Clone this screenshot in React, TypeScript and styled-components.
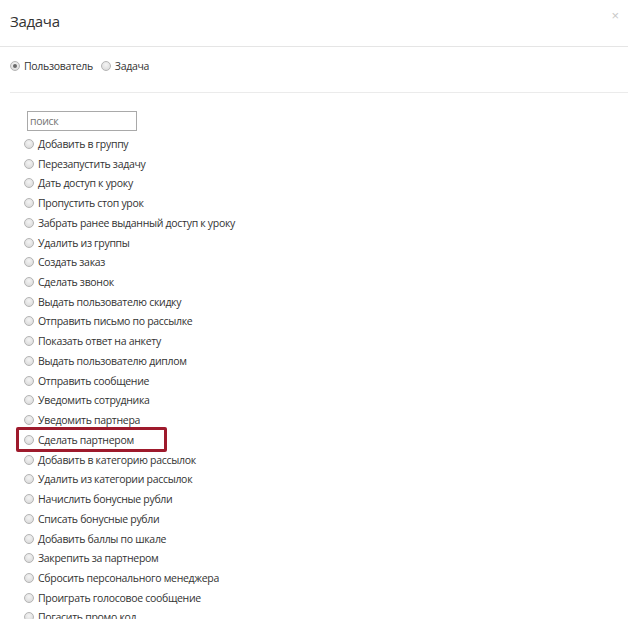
import React from "react";
import styled, { createGlobalStyle } from "styled-components";

const GlobalStyle = createGlobalStyle`
  html, body {
    margin: 0;
    padding: 0;
    background: #ffffff;
    font-family: "Open Sans", "Liberation Sans", Arial, sans-serif;
    color: #333333;
  }
`;

const Modal = styled.div`
  width: 628px;
  height: 619px;
  overflow: hidden;
  background: #fff;
`;

const Header = styled.div`
  position: relative;
  height: 47px;
  box-sizing: border-box;
  border-bottom: 1px solid #e5e5e5;
  padding: 0 10px;
  display: flex;
  align-items: center;
`;

const Title = styled.h4`
  margin: 0;
  font-size: 15px;
  font-weight: 400;
  letter-spacing: -0.3px;
  color: #333;
  padding-bottom: 4px;
`;

const Close = styled.span`
  position: absolute;
  right: 9px;
  top: 8px;
  font-family: "Liberation Sans", Arial, sans-serif;
  font-size: 13px;
  color: #c8c8c8;
`;

const Body = styled.div`
  padding: 0 0 0 10px;
`;

const ModeRow = styled.div`
  display: flex;
  align-items: center;
  height: 46px;
  box-sizing: border-box;
  padding-bottom: 8px;
  border-bottom: 1px solid #ebebeb;
  font-size: 10.5px;
  letter-spacing: -0.3px;
`;

const ModeOption = styled.label`
  display: inline-flex;
  align-items: center;
  gap: 4px;
  margin-right: 8px;
`;

const Radio = styled.span<{ $checked?: boolean }>`
  display: inline-block;
  width: 8px;
  height: 8px;
  border-radius: 50%;
  border: 1px solid #b4b4b4;
  background: radial-gradient(circle at 50% 35%, #f4f4f4 0%, #d6d6d6 100%);
  flex: none;
  position: relative;
  &::after {
    content: "";
    display: ${(p) => (p.$checked ? "block" : "none")};
    position: absolute;
    left: 2px;
    top: 2px;
    width: 4px;
    height: 4px;
    border-radius: 50%;
    background: #6a6a6a;
  }
`;

const ListArea = styled.div`
  padding: 18px 0 0 17px;
`;

const Search = styled.input`
  display: block;
  width: 110px;
  height: 20px;
  box-sizing: border-box;
  border: 1px solid #a9a9a9;
  padding: 0 2px;
  font-size: 10.5px;
  letter-spacing: -0.3px;
  font-family: "Open Sans", "Liberation Sans", Arial, sans-serif;
  color: #333;
  margin-bottom: 3px;
  &::placeholder {
    color: #757575;
  }
`;

const Item = styled.div<{ $marked?: boolean }>`
  position: relative;
  display: flex;
  align-items: center;
  gap: 4px;
  height: 19.74px;
  margin-left: -3px;
  font-size: 10.5px;
  letter-spacing: -0.3px;
  white-space: nowrap;
  &::before {
    content: "";
    display: ${(p) => (p.$marked ? "block" : "none")};
    position: absolute;
    left: -8px;
    top: -3px;
    width: 151px;
    height: 25px;
    box-sizing: border-box;
    border: 3px solid #9e1a2c;
    border-radius: 2px;
  }
`;

const actions = [
  "Добавить в группу",
  "Перезапустить задачу",
  "Дать доступ к уроку",
  "Пропустить стоп урок",
  "Забрать ранее выданный доступ к уроку",
  "Удалить из группы",
  "Создать заказ",
  "Сделать звонок",
  "Выдать пользователю скидку",
  "Отправить письмо по рассылке",
  "Показать ответ на анкету",
  "Выдать пользователю диплом",
  "Отправить сообщение",
  "Уведомить сотрудника",
  "Уведомить партнера",
  "Сделать партнером",
  "Добавить в категорию рассылок",
  "Удалить из категории рассылок",
  "Начислить бонусные рубли",
  "Списать бонусные рубли",
  "Добавить баллы по шкале",
  "Закрепить за партнером",
  "Сбросить персонального менеджера",
  "Проиграть голосовое сообщение",
  "Погасить промо код",
];

export default function App() {
  return (
    <>
      <GlobalStyle />
      <Modal>
        <Header>
          <Title>Задача</Title>
          <Close>×</Close>
        </Header>
        <Body>
          <ModeRow>
            <ModeOption>
              <Radio $checked />
              Пользователь
            </ModeOption>
            <ModeOption>
              <Radio />
              Задача
            </ModeOption>
          </ModeRow>
          <ListArea>
            <Search placeholder="поиск" />
            {actions.map((a) => (
              <Item key={a} $marked={a === "Сделать партнером"}>
                <Radio />
                {a}
              </Item>
            ))}
          </ListArea>
        </Body>
      </Modal>
    </>
  );
}
